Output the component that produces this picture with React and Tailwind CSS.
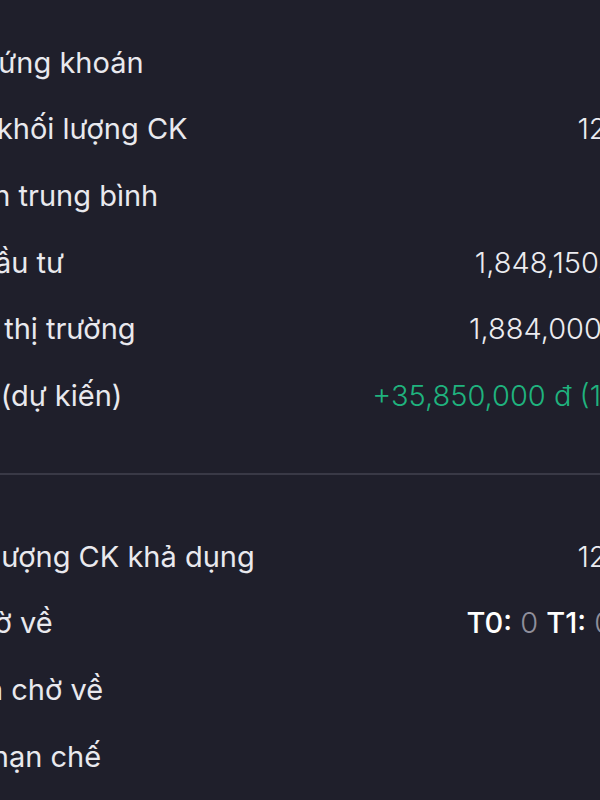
import React from 'react';

// the screenshot is a crop of a wider card: labels start left of the frame, values run past the right edge
const topRows = [
  { label: 'Mã chứng khoán', value: '', ml: '-ml-[86px]', mr: '-mr-[80px]' },
  { label: 'Tổng khối lượng CK', value: '120,000', ml: '-ml-[80px]', mr: '-mr-[85px]' },
  { label: 'Giá vốn trung bình', value: '15,401', ml: '-ml-[93px]', mr: '-mr-[110px]' },
  { label: 'Vốn đầu tư', value: '1,848,150,000 đ', ml: '-ml-[84px]', mr: '-mr-[85px]' },
  { label: 'Giá trị thị trường', value: '1,884,000,000 đ', ml: '-ml-[85px]', mr: '-mr-[88px]' },
  { label: 'Lãi/lỗ (dự kiến)', value: '+35,850,000 đ (1.94%)', green: true, ml: '-ml-[82px]', mr: '-mr-[82px]' },
];

const bottomRows = [
  { label: 'Khối lượng CK khả dụng', value: '120,000', ml: '-ml-[75px]', mr: '-mr-[85px]' },
  { label: 'CK chờ về', tn: true, ml: '-ml-[88px]', mr: '-mr-[92px]' },
  { label: 'Quyền chờ về', value: '0', ml: '-ml-[86px]', mr: '-mr-[90px]' },
  { label: 'CK hạn chế', value: '0', ml: '-ml-[57px]', mr: '-mr-[90px]' },
];

const Row = ({ row }) => (
  <div className="h-[66.7px] flex items-center justify-between">
    <span
      className={`${row.ml} font-['Inter',sans-serif] text-[29px] text-[#e9e9ee] whitespace-nowrap`}
    >
      {row.label}
    </span>
    {row.tn ? (
      <span className={`${row.mr} font-['Inter',sans-serif] text-[29px] whitespace-nowrap`}>
        <b className="font-medium text-white">T0:</b> <span className="font-light text-[#8f8f9b]">0</span>{' '}
        <b className="font-medium text-white">T1:</b> <span className="font-light text-[#8f8f9b]">0</span>{' '}
        <b className="font-medium text-white">T2:</b> <span className="font-light text-[#8f8f9b]">0</span>
      </span>
    ) : (
      <span
        className={`${row.mr} font-['Inter',sans-serif] font-light text-[29px] whitespace-nowrap ${
          row.green ? 'text-[#1fb37e]' : 'text-[#ececf0]'
        }`}
      >
        {row.value}
      </span>
    )}
  </div>
);

export default function App() {
  return (
    <div className="w-[600px] h-[800px] overflow-hidden bg-[#1f1f2b]">
      <div className="pt-[29px]">
        {topRows.map((r) => (
          <Row key={r.label} row={r} />
        ))}
        <div className="mt-[44px] mb-[48px] h-[2px] bg-[#393946]" />
        {bottomRows.map((r) => (
          <Row key={r.label} row={r} />
        ))}
      </div>
    </div>
  );
}
